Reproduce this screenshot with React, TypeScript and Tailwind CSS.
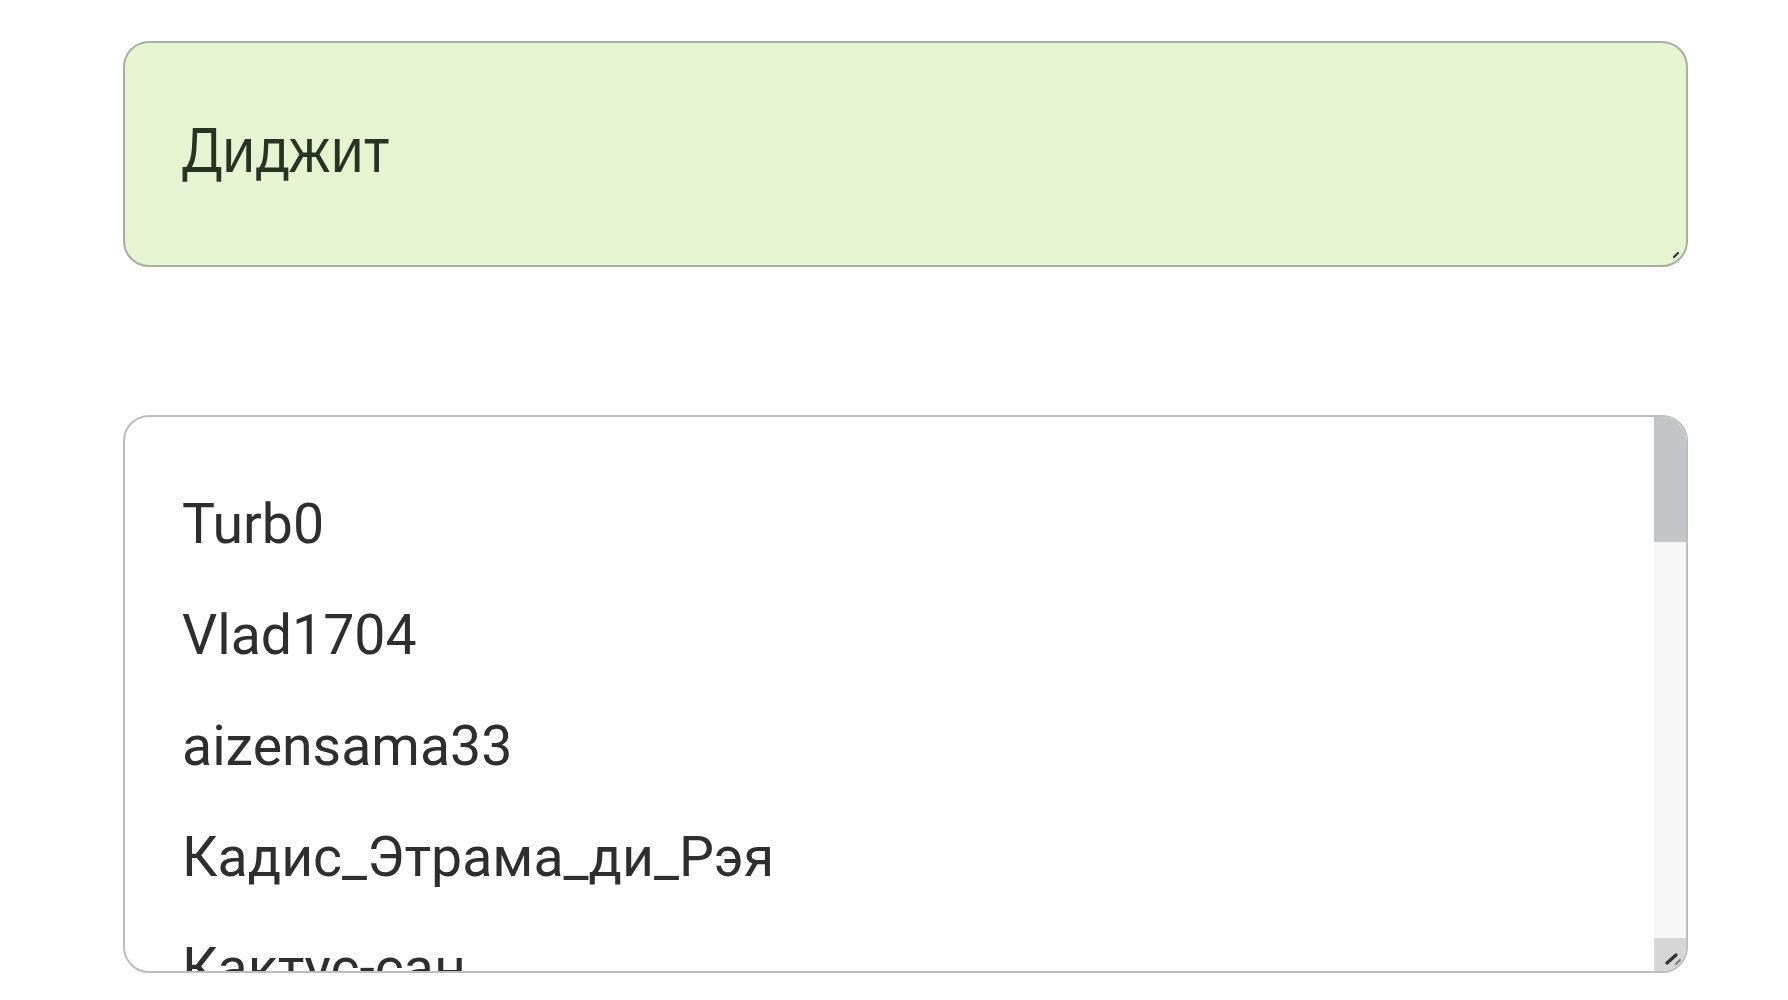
import React from "react";

const items = ["Turb0", "Vlad1704", "aizensama33", "Кадис_Этрама_ди_Рэя", "Кактус-сан", "Ёжик"];

export default function App() {
  return (
    <div className="min-h-[1000px] w-full bg-white pt-[41px]">
      <div className="relative ml-[123px] flex h-[226px] w-[1565px] items-center rounded-[26px] border-2 border-[#a9aea4] bg-[#e6f5d1] pb-[13px] pl-[57px]">
        <span
          className="inline-block origin-left scale-x-[0.88] whitespace-nowrap text-[62px] leading-none text-[#263424]"
          style={{ fontFamily: '"Noto Sans", sans-serif' }}
        >
          Диджит
        </span>
        <svg className="absolute bottom-[6px] right-[5px]" width="8" height="8" viewBox="0 0 8 8">
          <path d="M1 6 L5 2" stroke="#333" strokeWidth="2.2" strokeLinecap="round" />
        </svg>
      </div>
      <div className="ml-[123px] mt-[148px] flex h-[558px] w-[1565px] overflow-hidden rounded-[26px] border-2 border-[#bdbdbd] bg-white">
        <div className="flex-1 overflow-hidden pl-[57px] pt-[52px]">
          {items.map((t) => (
            <div
              key={t}
              className="h-[111px] whitespace-nowrap text-[55.4px] leading-[111px] text-[#2e2e2e]"
              style={{ fontFamily: "Roboto, sans-serif" }}
            >
              {t}
            </div>
          ))}
        </div>
        <div className="flex w-[32px] flex-col bg-[#f7f7f7]">
          <div className="h-[125px] bg-[#c4c5c8]" />
          <div className="flex-1" />
          <div className="relative h-[33px] bg-[#d6d6d6]">
            <svg className="absolute bottom-[4px] right-[3px]" width="20" height="18" viewBox="0 0 20 18">
              <path d="M4 14 L13 6" stroke="#333" strokeWidth="3.2" strokeLinecap="round" />
              <path d="M13 15 L17 11" stroke="#777" strokeWidth="2" strokeLinecap="round" />
            </svg>
          </div>
        </div>
      </div>
    </div>
  );
}
